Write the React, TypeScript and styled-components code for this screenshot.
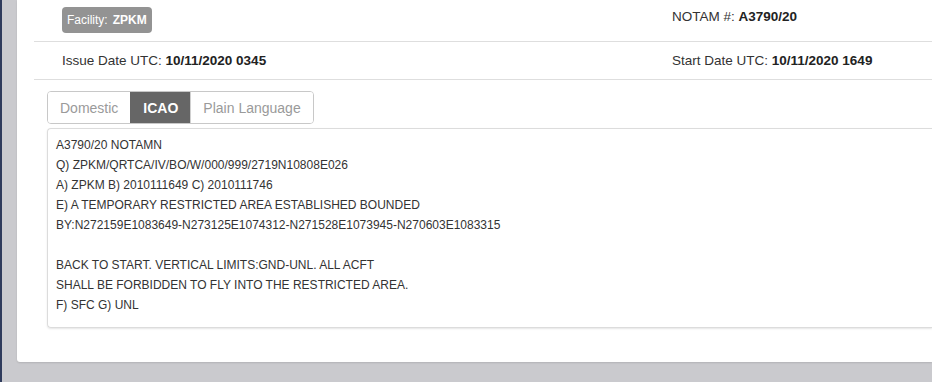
import React, {useState} from 'react';
import styled, {createGlobalStyle} from 'styled-components';

const GlobalStyle = createGlobalStyle`
  html, body {
    margin: 0;
    padding: 0;
    background: #cacace;
    overflow: hidden;
    font-family: Arial, "Liberation Sans", Helvetica, sans-serif;
    color: #333;
  }
`

const Page = styled.div`
  display: flex;
  height: 382px;
  border-left: 2px solid #2f3b5c;
  padding-left: 15px;
`

const Panel = styled.div`
  flex: 1;
  height: 362px;
  background: #fff;
  border-bottom-left-radius: 3px;
  box-shadow: 0 1px 2px rgba(0, 0, 0, 0.12);
  padding-left: 17px;
  box-sizing: border-box;
`

const InfoRow = styled.div<{h: number}>`
  display: grid;
  grid-template-columns: 610px 1fr;
  height: ${p => p.h}px;
  border-bottom: 1px solid #dedede;
  padding-left: 28px;
  align-items: center;
  font-size: 13.5px;
`

const Cell = styled.div<{top?: number}>`
  align-self: ${p => (p.top !== undefined ? 'start' : 'center')};
  padding-top: ${p => p.top ?? 0}px;
  b {
    font-weight: bold;
    color: #222;
  }
`

const Badge = styled.span`
  display: inline-flex;
  align-items: center;
  height: 26px;
  margin-top: 7px;
  padding: 0 5px;
  border-radius: 4px;
  background: #939393;
  color: #fff;
  font-size: 12px;
  b {
    margin-left: 5px;
    color: #fff;
  }
`

const Body = styled.div`
  padding: 11px 0 0 13px;
`

const Tabs = styled.div`
  display: inline-flex;
  height: 33px;
  border: 1px solid #c8c8c8;
  border-radius: 4px;
  overflow: hidden;
  box-sizing: border-box;
`

const Tab = styled.button<{active?: boolean}>`
  border: none;
  border-left: 1px solid ${p => (p.active ? '#666' : '#d0d0d0')};
  &:first-child {
    border-left: none;
  }
  background: ${p => (p.active ? '#666' : '#fff')};
  color: ${p => (p.active ? '#fff' : '#9a9a9a')};
  font-family: inherit;
  font-size: 14px;
  font-weight: ${p => (p.active ? 'bold' : 'normal')};
  padding: 0 12px;
  cursor: pointer;
`

const TextBox = styled.pre`
  margin: 4px 0 0 0;
  height: 200px;
  box-sizing: border-box;
  border: 1px solid #dcdcdc;
  border-right: none;
  border-radius: 4px 0 0 4px;
  box-shadow: 0 1px 2px rgba(0, 0, 0, 0.1);
  padding: 6px 8px;
  font-family: Arial, "Liberation Sans", Helvetica, sans-serif;
  font-size: 12px;
  line-height: 20px;
  color: #333;
  white-space: pre-wrap;
`

const texts: Record<string, string> = {
    Domestic: 'ZPKM A3790/20 ZPKM AIRSPACE TEMPORARY RESTRICTED AREA ESTABLISHED',
    ICAO: `A3790/20 NOTAMN
Q) ZPKM/QRTCA/IV/BO/W/000/999/2719N10808E026
A) ZPKM B) 2010111649 C) 2010111746
E) A TEMPORARY RESTRICTED AREA ESTABLISHED BOUNDED
BY:N272159E1083649-N273125E1074312-N271528E1073945-N270603E1083315

BACK TO START. VERTICAL LIMITS:GND-UNL. ALL ACFT
SHALL BE FORBIDDEN TO FLY INTO THE RESTRICTED AREA.
F) SFC G) UNL`,
    'Plain Language': 'A temporary restricted area is established.',
}

export default function App() {
    const [tab, setTab] = useState('ICAO')

    return (
        <Page>
            <GlobalStyle/>
            <Panel>
                <InfoRow h={41}>
                    <Cell top={0}>
                        <Badge>Facility: <b>ZPKM</b></Badge>
                    </Cell>
                    <Cell top={9}>NOTAM #: <b>A3790/20</b></Cell>
                </InfoRow>
                <InfoRow h={37}>
                    <Cell>Issue Date UTC: <b>10/11/2020 0345</b></Cell>
                    <Cell>Start Date UTC: <b>10/11/2020 1649</b></Cell>
                </InfoRow>
                <Body>
                    <Tabs>
                        {Object.keys(texts).map(name => (
                            <Tab key={name} active={tab === name} onClick={() => setTab(name)}>
                                {name}
                            </Tab>
                        ))}
                    </Tabs>
                    <TextBox>{texts[tab]}</TextBox>
                </Body>
            </Panel>
        </Page>
    )
}
